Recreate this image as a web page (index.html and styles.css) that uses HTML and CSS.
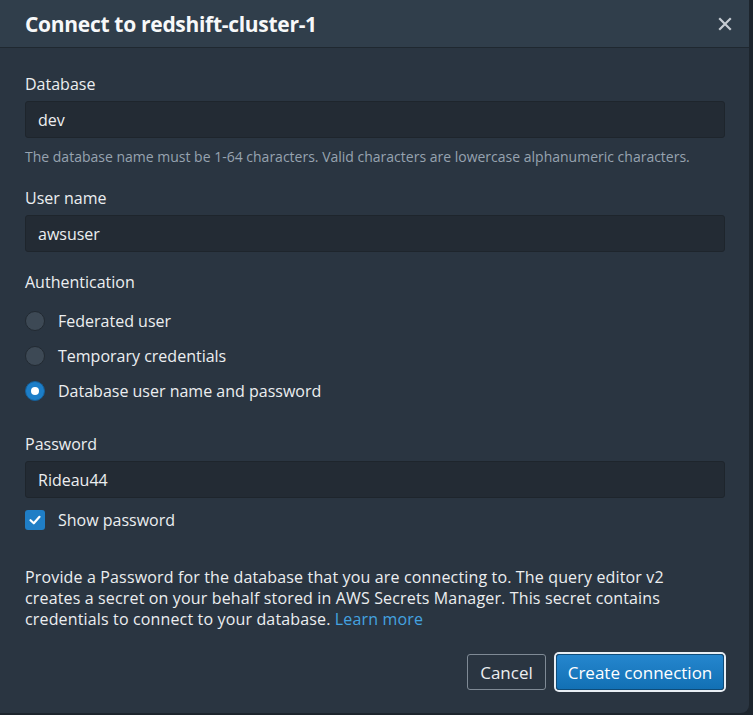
FILE: index.html
```html
<!DOCTYPE html>
<html>
<head>
<meta charset="utf-8">
<link rel="stylesheet" href="styles.css">
</head>
<body>
<div class="modal">
  <div class="header">
    <h1 class="title">Connect to redshift-cluster-1</h1>
    <span class="close" aria-label="Close">
      <svg width="14" height="14" viewBox="0 0 14 14"><path d="M2 2L12 12M12 2L2 12" stroke="#c6ccd3" stroke-width="2.2" stroke-linecap="square"/></svg>
    </span>
  </div>
  <div class="body">
    <div class="field">
      <label class="label">Database</label>
      <div class="input">dev</div>
      <div class="hint">The database name must be 1-64 characters. Valid characters are lowercase alphanumeric characters.</div>
    </div>
    <div class="field">
      <label class="label">User name</label>
      <div class="input">awsuser</div>
    </div>
    <div class="field auth">
      <div class="label">Authentication</div>
      <div class="radios">
        <div class="radio-row"><span class="radio"></span>Federated user</div>
        <div class="radio-row"><span class="radio"></span>Temporary credentials</div>
        <div class="radio-row"><span class="radio checked"></span>Database user name and password</div>
      </div>
    </div>
    <div class="field pw">
      <label class="label">Password</label>
      <div class="input">Rideau44</div>
      <div class="check-row">
        <span class="checkbox"><svg width="14" height="14" viewBox="0 0 14 14"><path d="M2.5 7.2L5.8 10.3L11.5 3.8" fill="none" stroke="#fff" stroke-width="2.2" stroke-linecap="round" stroke-linejoin="round"/></svg></span>
        Show password
      </div>
    </div>
    <p class="desc">Provide a Password for the database that you are connecting to. The query editor v2 creates a secret on your behalf stored in AWS Secrets Manager. This secret contains credentials to connect to your database. <a class="link" href="#">Learn more</a></p>
    <div class="footer">
      <button class="btn btn-cancel">Cancel</button>
      <button class="btn btn-primary">Create connection</button>
    </div>
  </div>
</div>
</body>
</html>
```
FILE: styles.css
```css
html, body {
  margin: 0;
  padding: 0;
  background: #1d252d;
  width: 753px;
  height: 715px;
  overflow: hidden;
}
body {
  font-family: "Open Sans", "Liberation Sans", sans-serif;
  color: #e8ebee;
}
.modal {
  width: 749px;
  height: 713px;
  background: #2a3541;
  border-bottom-right-radius: 8px;
  display: flex;
  flex-direction: column;
}
.header {
  height: 47px;
  background: #303e4b;
  border-bottom: 1px solid #1f2830;
  display: flex;
  align-items: center;
  justify-content: space-between;
  padding: 0 17px 0 25px;
}
.title {
  margin: 0;
  font-size: 21px;
  font-weight: 700;
  color: #f7f8f9;
  letter-spacing: -0.3px;
}
.close {
  display: flex;
  width: 14px;
  height: 14px;
}
.body {
  padding: 25px 24px 0 25px;
  display: flex;
  flex-direction: column;
}
.field {
  display: flex;
  flex-direction: column;
}
.label {
  font-size: 16px;
  line-height: 22px;
  color: #eceef0;
  margin-bottom: 6px;
}
.input {
  height: 37px;
  box-sizing: border-box;
  background: #232b34;
  border: 1px solid #1e252c;
  border-radius: 3px;
  padding: 0 12px;
  display: flex;
  align-items: center;
  font-size: 16px;
  color: #eceef0;
}
.hint {
  font-size: 14px;
  color: #97a3b0;
  line-height: 20px;
  margin-top: 9px;
  margin-bottom: 20px;
}
.auth {
  margin-top: 19px;
}
.auth .label {
  margin-bottom: 18px;
}
.radios {
  display: flex;
  flex-direction: column;
  gap: 15px;
}
.radio-row {
  display: flex;
  align-items: center;
  gap: 13px;
  font-size: 16px;
  line-height: 20px;
  color: #eceef0;
}
.radio {
  width: 20px;
  height: 20px;
  box-sizing: border-box;
  border-radius: 50%;
  background: #3d4955;
  border: 1px solid #222a32;
  flex: none;
}
.radio.checked {
  background: #1c7ec8;
  border: 1px solid #155f98;
  position: relative;
}
.radio.checked::after {
  content: "";
  position: absolute;
  left: 5px;
  top: 5px;
  width: 8px;
  height: 8px;
  border-radius: 50%;
  background: #fff;
}
.pw {
  margin-top: 32px;
}
.check-row {
  display: flex;
  align-items: center;
  gap: 13px;
  margin-top: 11px;
  font-size: 16px;
  color: #eceef0;
}
.checkbox {
  width: 20px;
  height: 20px;
  border-radius: 3px;
  background: #1f7ec6;
  display: flex;
  align-items: center;
  justify-content: center;
  flex: none;
}
.desc {
  margin: 36px 0 0 0;
  max-width: 690px;
  font-size: 16px;
  line-height: 21px;
  letter-spacing: 0.15px;
  color: #eceef0;
}
.link {
  color: #44a3e0;
  text-decoration: none;
}
.footer {
  display: flex;
  justify-content: flex-end;
  gap: 10px;
  margin-top: 24px;
}
.btn {
  font-family: "Open Sans", "Liberation Sans", sans-serif;
  font-size: 17px;
  height: 36px;
  border-radius: 3px;
  padding: 0 8px;
  cursor: pointer;
}
.btn-cancel {
  background: transparent;
  border: 1px solid #7f8a95;
  color: #eceef0;
  width: 79px;
}
.btn-primary {
  background: linear-gradient(#2586ce, #1270b4);
  border: 1px solid #0e4c7a;
  color: #fff;
  width: 168px;
  box-shadow: 0 0 0 2px #e8eef4;
  margin-right: 1px;
}
```
